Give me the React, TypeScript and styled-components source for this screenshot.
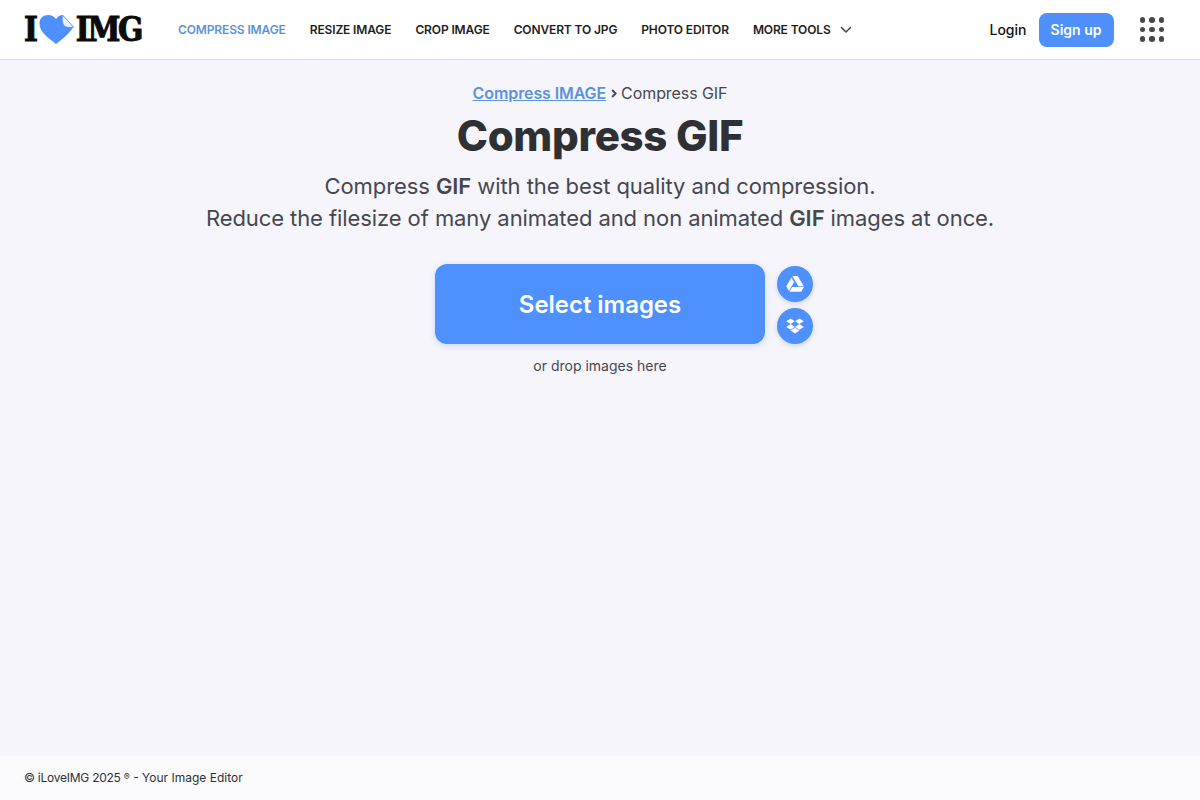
import React from "react";
import styled, { createGlobalStyle } from "styled-components";

const Global = createGlobalStyle`
  html, body { margin: 0; padding: 0; height: 100%; }
  body { background: #f5f5fb; font-family: Inter, "Liberation Sans", sans-serif; }
  #root { height: 100%; }
  * { box-sizing: border-box; }
`;

const Page = styled.div`
  display: flex;
  flex-direction: column;
  height: 800px;
  overflow: hidden;
`;

const Header = styled.header`
  height: 60px;
  flex: none;
  background: #fff;
  border-bottom: 1px solid #dcdcdf;
  display: flex;
  align-items: center;
  padding: 0 36px 0 24px;
`;

const Logo = styled.a`
  display: flex;
  align-items: center;
  width: 119px;
  height: 34px;
  flex: none;
`;

const LogoWord = styled.span`
  font-family: "DejaVu Serif Condensed", "DejaVu Serif", "Liberation Serif", serif;
  font-stretch: condensed;
  font-weight: 700;
  font-size: 33px;
  letter-spacing: -2.2px;
  color: #0b0b0b;
  -webkit-text-stroke: 1px #0b0b0b;
  line-height: 34px;
  white-space: nowrap;
`;

const LogoHeart = styled.svg`
  width: 35px;
  height: 30px;
  flex: none;
  margin: -1px 2px 0 3px;
`;

const Nav = styled.nav`
  display: flex;
  align-items: center;
  gap: 24px;
  margin-left: 35px;
`;

const NavItem = styled.a<{ $active?: boolean }>`
  display: flex;
  align-items: center;
  gap: 9px;
  font-size: 12px;
  font-weight: 600;
  letter-spacing: -0.13px;
  color: ${(p) => (p.$active ? "#5a93dc" : "#1d1d20")};
  white-space: nowrap;
`;

const Right = styled.div`
  margin-left: auto;
  display: flex;
  align-items: center;
`;

const Login = styled.a`
  font-size: 14px;
  font-weight: 500;
  color: #111;
  margin-right: 12px;
`;

const SignUp = styled.a`
  width: 75px;
  height: 34px;
  border-radius: 8px;
  background: #4d90fe;
  color: #fff;
  font-size: 14px;
  font-weight: 600;
  display: flex;
  align-items: center;
  justify-content: center;
`;

const Apps = styled.div`
  display: grid;
  grid-template-columns: repeat(3, 5.5px);
  gap: 4px;
  margin-left: 26px;
`;

const Dot = styled.span`
  width: 5.5px;
  height: 5.5px;
  border-radius: 50%;
  background: #47474f;
`;

const Main = styled.main`
  flex: 1;
  display: flex;
  flex-direction: column;
  align-items: center;
  padding-top: 23px;
`;

const Crumbs = styled.div`
  display: flex;
  align-items: center;
  font-size: 16px;
  line-height: 20px;
  letter-spacing: -0.08px;
  color: #47474f;
`;

const CrumbLink = styled.a`
  color: #5a93dc;
  font-weight: 600;
  letter-spacing: -0.1px;
  text-decoration: underline;
`;

const CrumbSep = styled.svg`
  width: 6px;
  height: 9px;
  margin: 0 4px 0 5px;
`;

const Title = styled.h1`
  margin: 8px 0 0;
  font-size: 42px;
  line-height: 50px;
  font-weight: 800;
  letter-spacing: -0.3px;
  color: #2f3034;
`;

const Sub = styled.p`
  margin: 9px 0 0;
  font-size: 22px;
  line-height: 32px;
  font-weight: 400;
  letter-spacing: -0.08px;
  color: #47474f;
  text-align: center;
  b { font-weight: 600; }
`;

const UploadRow = styled.div`
  position: relative;
  margin-top: 30px;
`;

const Select = styled.a`
  width: 330px;
  height: 80px;
  background: #4d90fe;
  border-radius: 12px;
  box-shadow: 0 2px 6px rgba(77, 144, 254, 0.25);
  color: #fff;
  font-size: 24px;
  font-weight: 600;
  letter-spacing: -0.04px;
  display: flex;
  align-items: center;
  justify-content: center;
`;

const Cloud = styled.div`
  position: absolute;
  left: 342px;
  top: 2px;
  display: flex;
  flex-direction: column;
  gap: 6px;
`;

const CloudBtn = styled.a`
  width: 36px;
  height: 36px;
  border-radius: 50%;
  background: #4d90fe;
  box-shadow: 0 2px 5px rgba(60, 90, 140, 0.2);
  display: flex;
  align-items: center;
  justify-content: center;
`;

const Drop = styled.div`
  margin-top: 12px;
  font-size: 14px;
  line-height: 20px;
  color: #47474f;
`;

const Footer = styled.footer`
  height: 44px;
  flex: none;
  background: #fbfbfd;
  display: flex;
  align-items: center;
  padding: 0 24px 1px;
  font-size: 12px;
  color: #2f3034;
`;

const Copy = styled.span`
  letter-spacing: -0.25px;
`;

const Reg = styled.span`
  font-size: 9px;
  vertical-align: 2px;
`;

export default function App() {
  return (
    <Page>
      <Global />
      <Header>
        <Logo>
          <LogoWord>I</LogoWord>
          <LogoHeart viewBox="0 0 35 30">
            <path d="M17 30 C11 25 0.5 19 0.5 9.5 C0.5 4 4.5 1 9 1 C12.5 1 15 2.5 17 5 C19 2.5 21 1 23.5 1 L34.5 13 C30 20 22 26 17 30 Z" fill="#4d90fe" />
            <path d="M23.5 1 L34.5 13 C30.5 14 26 13.5 24.5 11 C23 8.5 23 4 23.5 1 Z" fill="#eaf1fe" stroke="#4d90fe" strokeWidth="0.8" />
          </LogoHeart>
          <LogoWord>IMG</LogoWord>
        </Logo>
        <Nav>
          <NavItem $active>COMPRESS IMAGE</NavItem>
          <NavItem>RESIZE IMAGE</NavItem>
          <NavItem>CROP IMAGE</NavItem>
          <NavItem>CONVERT TO JPG</NavItem>
          <NavItem>PHOTO EDITOR</NavItem>
          <NavItem>
            MORE TOOLS
            <svg width="12" height="8" viewBox="0 0 12 8" fill="none">
              <path d="M1.5 1.5 L6 6 L10.5 1.5" stroke="#47474f" strokeWidth="1.5" strokeLinecap="round" strokeLinejoin="round" />
            </svg>
          </NavItem>
        </Nav>
        <Right>
          <Login>Login</Login>
          <SignUp>Sign up</SignUp>
          <Apps>
            {Array.from({ length: 9 }).map((_, i) => (
              <Dot key={i} />
            ))}
          </Apps>
        </Right>
      </Header>
      <Main>
        <Crumbs>
          <CrumbLink>Compress IMAGE</CrumbLink>
          <CrumbSep viewBox="0 0 6 9" fill="none">
            <path d="M1.2 1 L4.6 4.5 L1.2 8" stroke="#47474f" strokeWidth="1.9" />
          </CrumbSep>
          Compress GIF
        </Crumbs>
        <Title>Compress GIF</Title>
        <Sub>
          Compress <b>GIF</b> with the best quality and compression.
          <br />
          Reduce the filesize of many animated and non animated <b>GIF</b> images at once.
        </Sub>
        <UploadRow>
          <Select>Select images</Select>
          <Cloud>
            <CloudBtn>
              <svg width="18" height="16" viewBox="0 0 18 16" fill="#fff">
                <path d="M6.3 0 H11.7 L17.8 10.3 H12.4 Z" />
                <path d="M5.4 1.4 L8 6 L3 15 L0.2 10.3 Z" />
                <path d="M6.2 11 H18 L15.2 15.8 H3.5 Z" />
              </svg>
            </CloudBtn>
            <CloudBtn>
              <svg width="18" height="17" viewBox="0 0 18 17" fill="#fff">
                <path d="M4.6 0.5 L9 3.3 L4.6 6.1 L0.2 3.3 Z" />
                <path d="M13.4 0.5 L17.8 3.3 L13.4 6.1 L9 3.3 Z" />
                <path d="M4.6 6.1 L9 8.9 L4.6 11.7 L0.2 8.9 Z" />
                <path d="M13.4 6.1 L17.8 8.9 L13.4 11.7 L9 8.9 Z" />
                <path d="M4.6 12.6 L9 9.8 L13.4 12.6 L9 15.6 Z" />
              </svg>
            </CloudBtn>
          </Cloud>
        </UploadRow>
        <Drop>or drop images here</Drop>
      </Main>
      <Footer>
        <span>
          <Copy>© iLoveIMG 2025 </Copy>
          <Reg>®</Reg> - Your Image Editor
        </span>
      </Footer>
    </Page>
  );
}
